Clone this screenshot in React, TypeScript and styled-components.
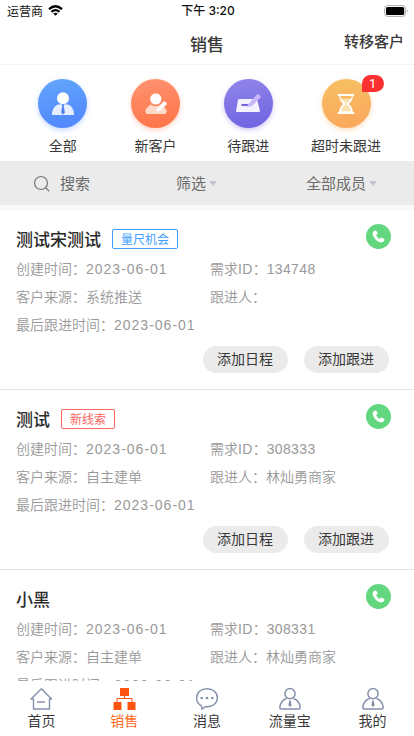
import React from "react";
import styled, { createGlobalStyle } from "styled-components";

const GlobalStyle = createGlobalStyle`
  * { box-sizing: border-box; }
  html, body { margin: 0; padding: 0; background: #fff; overflow: hidden; }
  body { font-family: "Noto Sans CJK SC", sans-serif; color: #383838; }
  svg { display: block; flex: none; }
`;

const Screen = styled.div`
  display: flex;
  flex-direction: column;
  width: 414px;
  height: 736px;
  overflow: hidden;
  background: #fff;
`;

const StatusBar = styled.div`
  display: grid;
  grid-template-columns: 1fr auto 1fr;
  align-items: center;
  height: 21px;
  flex: none;
  padding: 0 5px 0 7px;
  font-size: 12px;
  line-height: 20px;
  color: #111;
`;

const Carrier = styled.div`
  display: flex;
  align-items: center;
  gap: 5px;
`;

const Clock = styled.div`
  font-family: Inter, "Noto Sans CJK SC", sans-serif;
  font-weight: 500;
`;

const Battery = styled.div`
  justify-self: end;
`;

const Header = styled.header`
  display: grid;
  grid-template-columns: 1fr auto 1fr;
  align-items: center;
  height: 44px;
  flex: none;
  padding: 0 10px;
  border-bottom: 1px solid #f3f3f3;
`;

const Title = styled.h1`
  grid-column: 2;
  margin: 2px 0 0;
  font-size: 17px;
  line-height: 24px;
  font-weight: 500;
`;

const HeaderAction = styled.div`
  justify-self: end;
  margin-top: -3px;
  font-size: 15px;
  line-height: 22px;
  font-weight: 500;
`;

const Categories = styled.nav`
  display: grid;
  grid-template-columns: repeat(3, 92.7px) 103px;
  height: 96px;
  flex: none;
  padding: 14px 0 0 16.5px;
`;

const Category = styled.div`
  display: flex;
  flex-direction: column;
  align-items: center;
  gap: 7px;
  font-size: 14px;
  line-height: 20px;
`;

const Disc = styled.div<{ $from: string; $to: string; $glow: string }>`
  position: relative;
  display: flex;
  align-items: center;
  justify-content: center;
  width: 49px;
  height: 49px;
  border-radius: 50%;
  background: linear-gradient(170deg, ${(p) => p.$from}, ${(p) => p.$to});
  box-shadow: 0 2px 5px ${(p) => p.$glow};
`;

const Badge = styled.span`
  position: absolute;
  left: 40px;
  top: -4px;
  width: 22px;
  height: 17px;
  border-radius: 9px 9px 9px 1px;
  background: #fb3030;
  color: #fff;
  font-family: Roboto, sans-serif;
  font-size: 13px;
  line-height: 17px;
  text-align: center;
`;

const FilterBar = styled.div`
  display: grid;
  grid-template-columns: 176px 130px 1fr;
  align-items: center;
  height: 49px;
  flex: none;
  border-bottom: 5px solid #f8f8f8;
  background: #ebebeb;
  color: #6c6c6c;
  font-size: 15px;
  line-height: 22px;
`;

const Filter = styled.div<{ $search?: boolean }>`
  display: flex;
  align-items: center;
  gap: ${(p) => (p.$search ? "10px" : "3px")};
  padding-left: ${(p) => (p.$search ? "33px" : "0")};
`;

const Caret = styled.i`
  margin-top: 1px;
  border: 4px solid transparent;
  border-top: 5px solid #c2c5cc;
  border-bottom: 0;
`;

const List = styled.main`
  flex: 1;
  min-height: 0;
  overflow: hidden;
`;

const Card = styled.article`
  height: 180px;
  padding: 13px 23px 0 16px;
  border-bottom: 1px solid #e4e4e4;
`;

const CardHead = styled.div`
  display: flex;
  align-items: flex-start;
  height: 31px;
`;

const Name = styled.h2`
  margin: 3px 11px 0 0;
  font-size: 17px;
  line-height: 25px;
  font-weight: 500;
  color: #2b2b2b;
`;

const Tag = styled.span<{ $color: string }>`
  margin-top: 6px;
  height: 20px;
  padding: 0 8px;
  border: 1px solid ${(p) => p.$color};
  border-radius: 2px;
  color: ${(p) => p.$color};
  font-size: 12px;
  line-height: 17px;
`;

const Call = styled.div`
  display: flex;
  align-items: center;
  justify-content: center;
  width: 25px;
  height: 25px;
  margin: 1px 0 0 auto;
  border-radius: 50%;
  background: #63d780;
`;

const Details = styled.div`
  display: grid;
  grid-template-columns: 194px 1fr;
  grid-auto-rows: 28px;
  align-items: center;
  font-size: 14px;
  line-height: 20px;
  font-weight: 350;
  color: #999;
  white-space: nowrap;
`;

const Latin = styled.span<{ $date?: boolean }>`
  font-family: "Liberation Sans", sans-serif;
  letter-spacing: ${(p) => (p.$date ? "1px" : "0.35px")};
`;

const Actions = styled.div`
  display: flex;
  justify-content: flex-end;
  gap: 16px;
  margin: 8px 2px 0 0;
`;

const Pill = styled.button`
  width: 85px;
  height: 27px;
  padding: 0 1px 2px 0;
  border: 0;
  border-radius: 14px;
  background: #ebebeb;
  color: #383838;
  font: 14px/25px "Noto Sans CJK SC", sans-serif;
`;

const TabBar = styled.nav`
  display: grid;
  grid-template-columns: repeat(5, 1fr);
  height: 55px;
  flex: none;
  padding-top: 6px;
  background: #fff;
`;

const Tab = styled.div<{ $active?: boolean }>`
  display: flex;
  flex-direction: column;
  align-items: center;
  font-size: 14px;
  line-height: 18px;
  color: ${(p) => (p.$active ? "#fb6a1c" : "#383838")};
`;

const PersonGlyph = () => (
  <svg width="24" height="24" viewBox="0 0 24 24">
    <circle cx="12" cy="6.3" r="6" fill="#fff" />
    <path d="M1 23c0-7 3.500-10.500 8-10.800h6c4.500.3 8 3.800 8 10.800z" fill="#e6edff" />
    <path d="M10.500 12.200h3l-.8 2 1.200 6.300L12 22.400l-1.900-1.900 1.200-6.300z" fill="#4d7df1" />
  </svg>
);

const EditPersonGlyph = () => (
  <svg width="24" height="24" viewBox="0 0 24 24">
    <path d="M6.500 12.500c3 2.300 7.500 2.300 10.500 0l5 4.500c1.500 2.500.5 5-2 5H4c-3 0-3.500-3-1.500-5.500z" fill="#ffd9ca" />
    <circle cx="11.800" cy="7" r="6" fill="#fff" stroke="#ff8861" strokeWidth=".8" />
    <path d="M13.500 16.200l5.800-6.500q1-.8 2 0l1.100 1q.8 1 0 2L16 18.800q-2 1-4 .2z" fill="#fff" />
  </svg>
);

const NoteGlyph = () => (
  <svg width="26" height="26" viewBox="0 0 26 26">
    <path d="M4 8h17q1 0 1.200 1L25 20q0 1-1 1H2q-1 0-1-1L3 9q.2-1 1-1z" fill="#f4f2ff" />
    <path d="M6.500 14h8" stroke="#7163dc" strokeWidth="2" />
    <path d="M13 13.500l9-10q1-.8 2 0l1.300 1.200q.8 1 0 2l-8.600 8.600-4.700.8z" fill="#c9b6fa" />
  </svg>
);

const HourglassGlyph = () => (
  <svg width="20" height="22" viewBox="0 0 20 22">
    <path d="M4 3c0 4 2 6 4.500 8C6 13 4 15 4 19h12c0-4-2-6-4.500-8C14 9 16 7 16 3z" fill="#fde1af" stroke="#fff" strokeWidth="1.700" />
    <path d="M4.500 3h11v2.500h-11z" fill="#f9b860" />
    <path d="M2.500 2h15M2.500 20h15" stroke="#fff" strokeWidth="2" strokeLinecap="round" />
  </svg>
);

const SearchGlyph = () => (
  <svg width="17" height="17" viewBox="0 0 17 17" fill="none" stroke="#777" strokeWidth="1.200">
    <circle cx="8" cy="8" r="6.500" />
    <path d="M12.600 12.700l3.200 3.100" strokeLinecap="round" />
  </svg>
);

const PhoneGlyph = () => (
  <svg width="15" height="15" viewBox="0 0 15 15">
    <path d="M4.400 1.600C2.600 1.800 1.200 3.500 1.700 5.200c1 4 4 7.200 8 8.100 1.600.3 3.200-.7 3.700-2.300.2-.6 0-1-.5-1.300l-2-1c-.7-.3-1.200 0-1.500.6-.4.7-1 .7-1.600.2C6.700 8.600 5.900 7.500 5.400 6.400c-.2-.5 0-.8.500-1.100.7-.3.8-.9.500-1.500l-.8-1.600c-.3-.5-.6-.7-1.200-.6z" fill="#fff" />
  </svg>
);

const HomeGlyph = () => (
  <svg width="24" height="24" viewBox="0 0 24 24" fill="none" stroke="#8490aa" strokeWidth="1.400" strokeLinejoin="round" strokeLinecap="round">
    <path d="M4.500 12v10h16V12h2L13.200 2.400q-.8-.7-1.600 0L2 12z" />
    <path d="M8.500 15h7" />
  </svg>
);

const OrgGlyph = () => (
  <svg width="24" height="24" viewBox="0 0 24 24">
    <path d="M12.500 8v3.500M5 16v-4.500h15V16" fill="none" stroke="#fd5411" strokeWidth="1" />
    <path d="M8 1h9v8H8zM1.500 15h8v8h-8zM15.500 15h8v8h-8z" fill="#fd5411" />
  </svg>
);

const ChatGlyph = () => (
  <svg width="24" height="24" viewBox="0 0 24 24" fill="none" stroke="#8490aa" strokeWidth="1.400" strokeLinejoin="round">
    <path d="M12 1.700c6 0 10.400 4 10.400 9.100 0 5.100-4.400 9-10.400 9h-2L7 22.200 6.600 19C3.500 17.500 1.600 14.500 1.600 10.800c0-5.100 4.400-9.100 10.400-9.100z" />
    <g fill="#8490aa" stroke="none">
      <circle cx="6.700" cy="11" r="1.300" />
      <circle cx="12" cy="11" r="1.300" />
      <circle cx="17.300" cy="11" r="1.300" />
    </g>
  </svg>
);

const UserGlyph = () => (
  <svg width="24" height="24" viewBox="0 0 24 24" fill="none" stroke="#8490aa" strokeWidth="1.500" strokeLinejoin="round">
    <circle cx="12" cy="6.700" r="5.100" />
    <path d="M8.500 11.500C4.500 13 2.200 16 1.800 20.500q0 1.500 1.500 1.500h17.400q1.500 0 1.500-1.500c-.4-4.500-2.700-7.500-6.700-9" />
    <path d="M11.300 13.500h1.400l.9 4.800L12 20l-1.600-1.700z" fill="#8490aa" stroke="none" />
  </svg>
);

const WifiGlyph = () => (
  <svg width="15" height="11" viewBox="0 0 15 11" fill="none" stroke="#000" strokeWidth="2.300">
    <path d="M1 4.200Q7.500-1.700 14 4.200M3.500 6.900Q7.500 3.400 11.500 6.900" />
    <path d="M7.500 10.800L5.200 8.500q2.300-1.700 4.600 0z" fill="#000" stroke="none" />
  </svg>
);

const BatteryGlyph = () => (
  <svg width="25" height="12" viewBox="0 0 25 12">
    <rect x=".6" y=".6" width="21" height="10.800" rx="3" fill="none" stroke="#aaa" />
    <rect x="2" y="2" width="18.200" height="8" rx="1.600" fill="#000" />
    <path d="M23 4q1.500 2 0 4z" fill="#999" />
  </svg>
);

const categories = [
  { label: "全部", icon: <PersonGlyph />, from: "#63a6fc", to: "#5085fd", glow: "#5085fd55" },
  { label: "新客户", icon: <EditPersonGlyph />, from: "#ff9472", to: "#ff7245", glow: "#ff724555" },
  { label: "待跟进", icon: <NoteGlyph />, from: "#9286ea", to: "#6d61e1", glow: "#6d61e155" },
  { label: "超时未跟进", icon: <HourglassGlyph />, from: "#f7c163", to: "#fba55c", glow: "#fbb55c66", count: 1 },
];

const customers = [
  { name: "测试宋测试", tag: "量尺机会", color: "#409eff", source: "系统推送", id: "134748", owner: "", actions: ["添加日程", "添加跟进"] },
  { name: "测试", tag: "新线索", color: "#fd6560", source: "自主建单", id: "308333", owner: "林灿勇商家", actions: ["添加日程", "添加跟进"] },
  { name: "小黑", source: "自主建单", id: "308331", owner: "林灿勇商家", actions: [] },
];

const tabs = [
  { label: "首页", icon: <HomeGlyph /> },
  { label: "销售", icon: <OrgGlyph />, active: true },
  { label: "消息", icon: <ChatGlyph /> },
  { label: "流量宝", icon: <UserGlyph /> },
  { label: "我的", icon: <UserGlyph /> },
];

export default function App() {
  return (
    <Screen lang="zh-CN">
      <GlobalStyle />
      <StatusBar>
        <Carrier>运营商<WifiGlyph /></Carrier>
        <Clock>下午 3:20</Clock>
        <Battery><BatteryGlyph /></Battery>
      </StatusBar>
      <Header>
        <Title>销售</Title>
        <HeaderAction>转移客户</HeaderAction>
      </Header>
      <Categories>
        {categories.map((c) => (
          <Category key={c.label}>
            <Disc $from={c.from} $to={c.to} $glow={c.glow}>
              {c.icon}
              {c.count && <Badge>{c.count}</Badge>}
            </Disc>
            <span>{c.label}</span>
          </Category>
        ))}
      </Categories>
      <FilterBar>
        <Filter $search><SearchGlyph />搜索</Filter>
        <Filter>筛选<Caret /></Filter>
        <Filter>全部成员<Caret /></Filter>
      </FilterBar>
      <List>
        {customers.map((c) => (
          <Card key={c.id}>
            <CardHead>
              <Name>{c.name}</Name>
              {c.tag && <Tag $color={c.color!}>{c.tag}</Tag>}
              <Call><PhoneGlyph /></Call>
            </CardHead>
            <Details>
              <div>创建时间：<Latin $date>2023-06-01</Latin></div>
              <div>需求<Latin>ID</Latin>：<Latin>{c.id}</Latin></div>
              <div>客户来源：{c.source}</div>
              <div>跟进人：{c.owner}</div>
              <div>最后跟进时间：<Latin $date>2023-06-01</Latin></div>
            </Details>
            <Actions>
              {c.actions.map((a) => (
                <Pill key={a}>{a}</Pill>
              ))}
            </Actions>
          </Card>
        ))}
      </List>
      <TabBar>
        {tabs.map((t) => (
          <Tab key={t.label} $active={t.active}>
            {t.icon}
            {t.label}
          </Tab>
        ))}
      </TabBar>
    </Screen>
  );
}
